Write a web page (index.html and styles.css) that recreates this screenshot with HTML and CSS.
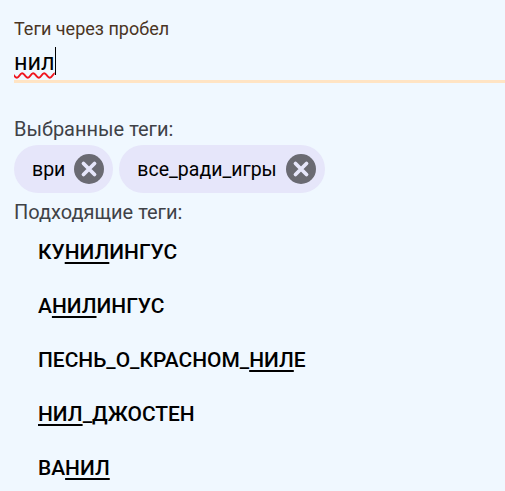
FILE: index.html
```html
<!DOCTYPE html>
<html>
    <head>
        <meta charset="utf-8">
        <title>Теги</title>
        <link rel="stylesheet" href="styles.css">
    </head>

    <body>
        <div class="field">
            <div class="fieldLabel">Теги через пробел</div>
            <div class="fieldInput"><span class="typo">нил</span><span class="caret"></span></div>
        </div>

        <div class="caption">Выбранные теги:</div>
        <div class="chips">
            <div class="chip">
                <span>ври</span>
                <svg class="chipClose" viewBox="0 0 30 30"><circle cx="15" cy="15" r="15" fill="#6a6a72"/><path d="M9.5 9.5 L20.5 20.5 M20.5 9.5 L9.5 20.5" stroke="#e6e6fa" stroke-width="3.8" stroke-linecap="round"/></svg>
            </div>
            <div class="chip">
                <span>все_ради_игры</span>
                <svg class="chipClose" viewBox="0 0 30 30"><circle cx="15" cy="15" r="15" fill="#6a6a72"/><path d="M9.5 9.5 L20.5 20.5 M20.5 9.5 L9.5 20.5" stroke="#e6e6fa" stroke-width="3.8" stroke-linecap="round"/></svg>
            </div>
        </div>

        <div class="caption captionSmall">Подходящие теги:</div>
        <div class="tags">
            <div class="tag">КУ<u>НИЛ</u>ИНГУС</div>
            <div class="tag">А<u>НИЛ</u>ИНГУС</div>
            <div class="tag">ПЕСНЬ_О_КРАСНОМ_<u>НИЛ</u>Е</div>
            <div class="tag"><u>НИЛ</u>_ДЖОСТЕН</div>
            <div class="tag">ВА<u>НИЛ</u></div>
        </div>
    </body>
</html>
```

FILE: styles.css
```css
html, body {height: 100%;}

body {
    margin: 0;
    padding: 0 0 0 14px;
    overflow: hidden;
    background-color: #f0f8ff;
    font-family: Roboto, "Liberation Sans", sans-serif;
    color: #000;
}

.field {
    padding-top: 19px;
    margin-bottom: 35px;
}

.fieldLabel {
    font-size: 18px;
    line-height: 20px;
    color: #4a3524;
}

.fieldInput {
    display: flex;
    align-items: flex-start;
    height: 32px;
    margin-top: 9px;
    font-size: 23.5px;
    line-height: 28px;
    border-bottom: 3px solid #ffe4c4;
}

.typo {
    height: 28px;
    text-decoration: underline wavy #f0141e 1.5px;
    text-underline-offset: 2px;
}

.caret {
    width: 1px;
    height: 28px;
    margin-top: -1px;
    background-color: #000;
}

.caption {
    font-size: 20px;
    line-height: 22px;
    color: #3f4247;
}

.captionSmall {
    margin-top: 8px;
}

.chips {
    display: flex;
    gap: 6px;
    margin-top: 5px;
}

.chip {
    display: flex;
    align-items: center;
    gap: 9px;
    height: 48px;
    padding: 0 9px 0 18px;
    border-radius: 24px;
    background-color: #e6e6fa;
    font-size: 19.5px;
}

.chipClose {
    width: 30px;
    height: 30px;
}

.tags {
    padding: 15px 0 0 24px;
}

.tag {
    height: 54px;
    font-size: 20.95px;
    font-weight: 500;
    line-height: 28px;
}

.tag u {
    text-decoration-thickness: 2px;
    text-underline-offset: 3px;
}
```
